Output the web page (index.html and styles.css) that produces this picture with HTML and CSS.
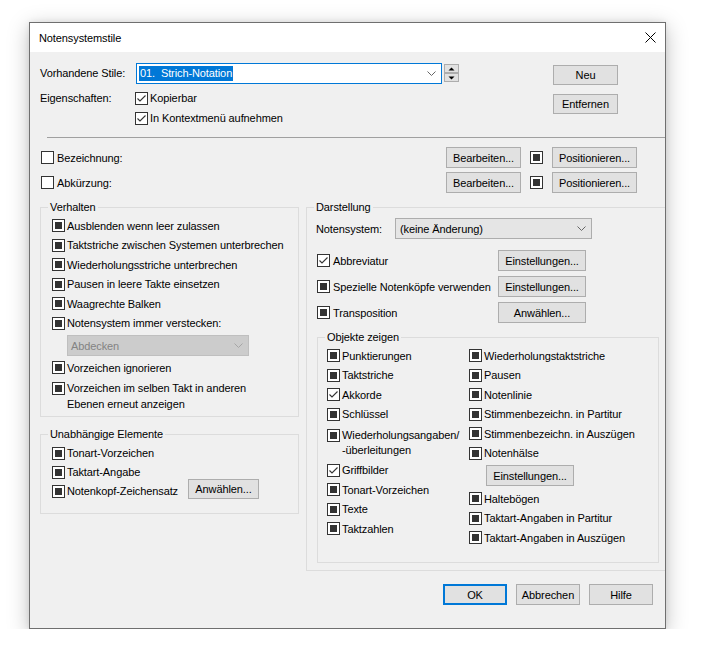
FILE: index.html
```html
<!DOCTYPE html>
<html lang="de">
<head>
<meta charset="utf-8">
<title>Notensystemstile</title>
<link rel="stylesheet" href="styles.css">
</head>
<body>
<div class="dialog">
  <div class="titlebar">
    <span class="title">Notensystemstile</span>
    <span class="close"><svg width="11" height="11" viewBox="0 0 11 11"><path d="M0.5 0.5 L10.5 10.5 M10.5 0.5 L0.5 10.5" stroke="#000" stroke-width="1" fill="none"/></svg></span>
  </div>
  <div class="content">
    <div class="top">
      <div class="top-grid">
        <span class="lbl lbl-combo">Vorhandene Stile:</span>
        <div class="style-row">
          <div class="combo focus"><span class="sel">01.&nbsp; Strich-Notation</span><svg class="chev" width="9" height="5" viewBox="0 0 9 5"><path d="M0.5 0.5 L4.5 4.5 L8.5 0.5" stroke="#666" fill="none"/></svg></div>
          <div class="spin">
            <span class="spin-btn"><svg width="7" height="4" viewBox="0 0 7 4"><path d="M0.5 3.5 L3.5 0.5 L6.5 3.5 Z" fill="#000"/></svg></span>
            <span class="spin-btn"><svg width="7" height="4" viewBox="0 0 7 4"><path d="M0.5 0.5 L3.5 3.5 L6.5 0.5 Z" fill="#000"/></svg></span>
          </div>
        </div>
        <span class="lbl lbl-props">Eigenschaften:</span>
        <div class="props">
          <div class="chk row20"><span class="cb on"><svg width="11" height="11" viewBox="0 0 11 11"><path d="M1.5 5.5 L4 8 L9.5 2.5" stroke="#333" stroke-width="1.1" fill="none"/></svg></span><span>Kopierbar</span></div>
          <div class="chk row20"><span class="cb on"><svg width="11" height="11" viewBox="0 0 11 11"><path d="M1.5 5.5 L4 8 L9.5 2.5" stroke="#333" stroke-width="1.1" fill="none"/></svg></span><span>In Kontextmenü aufnehmen</span></div>
        </div>
      </div>
      <div class="top-buttons">
        <button class="btn w65">Neu</button>
        <button class="btn w65">Entfernen</button>
      </div>
    </div>

    <div class="sep"></div>

    <div class="name-rows">
      <div class="name-row">
        <div class="chk gap3 name-chk"><span class="cb"></span><span>Bezeichnung:</span></div>
        <button class="btn edit">Bearbeiten...</button>
        <span class="cb ind mid"></span>
        <button class="btn pos">Positionieren...</button>
      </div>
      <div class="name-row">
        <div class="chk gap3 name-chk"><span class="cb"></span><span>Abkürzung:</span></div>
        <button class="btn edit">Bearbeiten...</button>
        <span class="cb ind mid"></span>
        <button class="btn pos">Positionieren...</button>
      </div>
    </div>

    <div class="cols">
      <div class="col-left">
        <div class="group g-verhalten">
          <div class="gtitle">Verhalten</div>
          <div class="gbody vb">
            <div class="chk r195"><span class="cb ind"></span><span>Ausblenden wenn leer zulassen</span></div>
            <div class="chk r195"><span class="cb ind"></span><span>Taktstriche zwischen Systemen unterbrechen</span></div>
            <div class="chk r195"><span class="cb ind"></span><span>Wiederholungsstriche unterbrechen</span></div>
            <div class="chk r195"><span class="cb ind"></span><span>Pausen in leere Takte einsetzen</span></div>
            <div class="chk r195"><span class="cb ind"></span><span>Waagrechte Balken</span></div>
            <div class="chk r195"><span class="cb ind"></span><span>Notensystem immer verstecken:</span></div>
            <div class="dd disabled"><span>Abdecken</span><svg class="chev" width="9" height="5" viewBox="0 0 9 5"><path d="M0.5 0.5 L4.5 4.5 L8.5 0.5" stroke="#a6a6a6" fill="none"/></svg></div>
            <div class="chk r195 after-dd"><span class="cb ind"></span><span>Vorzeichen ignorieren</span></div>
            <div class="chk multi m16"><span class="cb ind"></span><span>Vorzeichen im selben Takt in anderen<br>Ebenen erneut anzeigen</span></div>
          </div>
        </div>
        <div class="group g-unab">
          <div class="gtitle">Unabhängige Elemente</div>
          <div class="gbody ub">
            <div class="chk r19"><span class="cb ind"></span><span>Tonart-Vorzeichen</span></div>
            <div class="chk r19"><span class="cb ind"></span><span>Taktart-Angabe</span></div>
            <div class="chk r19"><span class="cb ind"></span><span class="fixlbl">Notenkopf-Zeichensatz</span><button class="btn sel-btn">Anwählen...</button></div>
          </div>
        </div>
      </div>

      <div class="col-right">
        <div class="group g-darst">
          <div class="gtitle">Darstellung</div>
          <div class="gbody db">
            <div class="ns-row">
              <span class="ns-lbl">Notensystem:</span>
              <div class="dd ns"><span>(keine Änderung)</span><svg class="chev" width="9" height="5" viewBox="0 0 9 5"><path d="M0.5 0.5 L4.5 4.5 L8.5 0.5" stroke="#666" fill="none"/></svg></div>
            </div>
            <div class="drows">
              <div class="drow">
                <div class="chk dchk"><span class="cb on"><svg width="11" height="11" viewBox="0 0 11 11"><path d="M1.5 5.5 L4 8 L9.5 2.5" stroke="#333" stroke-width="1.1" fill="none"/></svg></span><span>Abbreviatur</span></div>
                <button class="btn w88">Einstellungen...</button>
              </div>
              <div class="drow">
                <div class="chk dchk"><span class="cb ind"></span><span>Spezielle Notenköpfe verwenden</span></div>
                <button class="btn w88">Einstellungen...</button>
              </div>
              <div class="drow">
                <div class="chk dchk"><span class="cb ind"></span><span>Transposition</span></div>
                <button class="btn w88">Anwählen...</button>
              </div>
            </div>
            <div class="group g-obj">
              <div class="gtitle">Objekte zeigen</div>
              <div class="gbody ob">
                <div class="ocol">
                  <div class="chk r195"><span class="cb ind"></span><span>Punktierungen</span></div>
                  <div class="chk r195"><span class="cb ind"></span><span>Taktstriche</span></div>
                  <div class="chk r195"><span class="cb on"><svg width="11" height="11" viewBox="0 0 11 11"><path d="M1.5 5.5 L4 8 L9.5 2.5" stroke="#333" stroke-width="1.1" fill="none"/></svg></span><span>Akkorde</span></div>
                  <div class="chk r195"><span class="cb ind"></span><span>Schlüssel</span></div>
                  <div class="chk multi m15"><span class="cb ind"></span><span>Wiederholungsangaben/<br>-überleitungen</span></div>
                  <div class="chk r195"><span class="cb on"><svg width="11" height="11" viewBox="0 0 11 11"><path d="M1.5 5.5 L4 8 L9.5 2.5" stroke="#333" stroke-width="1.1" fill="none"/></svg></span><span>Griffbilder</span></div>
                  <div class="chk r195"><span class="cb ind"></span><span>Tonart-Vorzeichen</span></div>
                  <div class="chk r195"><span class="cb ind"></span><span>Texte</span></div>
                  <div class="chk r195"><span class="cb ind"></span><span>Taktzahlen</span></div>
                </div>
                <div class="ocol">
                  <div class="chk r195"><span class="cb ind"></span><span>Wiederholungstaktstriche</span></div>
                  <div class="chk r195"><span class="cb ind"></span><span>Pausen</span></div>
                  <div class="chk r195"><span class="cb ind"></span><span>Notenlinie</span></div>
                  <div class="chk r195"><span class="cb ind"></span><span>Stimmenbezeichn. in Partitur</span></div>
                  <div class="chk r195"><span class="cb ind"></span><span>Stimmenbezeichn. in Auszügen</span></div>
                  <div class="chk r195"><span class="cb ind"></span><span>Notenhälse</span></div>
                  <button class="btn w88 stem-btn">Einstellungen...</button>
                  <div class="chk r195"><span class="cb ind"></span><span>Haltebögen</span></div>
                  <div class="chk r195"><span class="cb ind"></span><span>Taktart-Angaben in Partitur</span></div>
                  <div class="chk r195"><span class="cb ind"></span><span>Taktart-Angaben in Auszügen</span></div>
                </div>
              </div>
            </div>
          </div>
        </div>
      </div>
    </div>

    <div class="footer">
      <button class="btn w64 default">OK</button>
      <button class="btn w64">Abbrechen</button>
      <button class="btn w64">Hilfe</button>
    </div>
  </div>
</div>
</body>
</html>
```

FILE: styles.css
```css
* { box-sizing: border-box; }
html, body { margin: 0; padding: 0; background: #ffffff; }
body {
  font-family: "Liberation Sans", Arial, sans-serif;
  font-size: 11px;
  letter-spacing: -0.1px;
  color: #000;
}

.dialog {
  margin: 22px 0 0 29px;
  width: 637px;
  height: 607px;
  border: 1px solid #6f6f6f;
  background: #f0f0f0;
  box-shadow: 0 5px 20px rgba(0, 0, 0, 0.25), 0 0 6px rgba(0, 0, 0, 0.08);
  overflow: hidden;
  display: flex;
  flex-direction: column;
}

.titlebar {
  height: 29px;
  flex: 0 0 29px;
  background: #ffffff;
  display: flex;
  align-items: center;
  padding: 0 9px 0 9px;
}
.title { font-size: 11px; }
.close { margin-left: auto; display: flex; }

.content {
  flex: 1;
  padding: 11px 0 0 10px;
  display: flex;
  flex-direction: column;
}

/* buttons */
.btn {
  font: inherit;
  letter-spacing: inherit;
  color: #000;
  height: 21px;
  padding: 0;
  background: #e1e1e1;
  border: 1px solid #adadad;
  display: flex;
  align-items: center;
  justify-content: center;
  white-space: nowrap;
}
.w65 { width: 65px; height: 20px; }
.w64 { width: 64px; }
.w88 { width: 88px; }
.default { border: 2px solid #0078d7; }

/* checkboxes */
.chk { display: flex; align-items: center; gap: 2px; white-space: nowrap; }
.gap3 { gap: 3px; }
.cb {
  width: 13px;
  height: 13px;
  flex: 0 0 13px;
  border: 1px solid #333333;
  background: #ffffff;
  display: flex;
  align-items: center;
  justify-content: center;
}
.cb.ind::after {
  content: "";
  width: 7px;
  height: 7px;
  background: #333333;
}
.row20 { height: 20px; }
.r195 { height: 19.5px; }
.r19 { height: 19px; }

/* top section */
.top { display: flex; }
.top-grid {
  display: grid;
  grid-template-columns: 95px auto;
  row-gap: 4px;
  align-items: start;
}
.lbl-combo { line-height: 21px; }
.lbl-props { line-height: 20px; }
.style-row { display: flex; gap: 2px; margin-left: 1px; }
.combo {
  width: 306px;
  height: 21px;
  border: 1px solid #0078d7;
  background: #ffffff;
  display: flex;
  align-items: center;
  padding-left: 2px;
}
.sel {
  background: #0078d7;
  color: #ffffff;
  line-height: 15px;
  padding: 0 1px;
}
.chev { margin-left: auto; margin-right: 5px; }
.spin { display: flex; flex-direction: column; margin-top: 1px; }
.spin-btn {
  width: 15px;
  height: 9px;
  background: #e1e1e1;
  border: 1px solid #adadad;
  display: flex;
  align-items: center;
  justify-content: center;
}
.top-buttons {
  margin-left: auto;
  margin-right: 47px;
  padding-top: 2px;
  display: flex;
  flex-direction: column;
  gap: 9px;
}

.sep {
  border-top: 1px solid #a0a0a0;
  margin: 9px 0 0 7px;
}

/* name rows */
.name-rows { margin-top: 9px; display: flex; flex-direction: column; gap: 4px; }
.name-row { display: flex; align-items: center; height: 21px; }
.name-chk { margin-left: 1px; }
.edit { margin-left: auto; width: 75px; }
.mid { margin: 0 9px; }
.pos { width: 85px; margin-right: 28px; }

/* columns */
.cols { display: flex; gap: 7px; margin-top: 14px; align-items: flex-start; }
.col-left { width: 259px; flex: 0 0 259px; display: flex; flex-direction: column; gap: 17px; }
.col-right { flex: 0 0 380px; }

.group { border: 1px solid #dcdcdc; }
.gtitle {
  width: max-content;
  margin: -8px 0 0 7px;
  padding: 0 2px;
  line-height: 14px;
  background: #f0f0f0;
}

.g-verhalten { height: 210px; }
.vb { padding: 2px 0 0 11px; }
.dd {
  height: 21px;
  display: flex;
  align-items: center;
  padding-left: 3px;
  border: 1px solid #adadad;
  background: #e5e5e5;
}
.dd.disabled {
  width: 182px;
  margin: 2px 0 2px 15px;
  background: #cccccc;
  border-color: #bfbfbf;
  color: #838383;
}
.multi { align-items: flex-start; }
.m16 { padding-top: 2.5px; }
.m16 > span:last-child { line-height: 16px; }
.m16 .cb { margin-top: 1.5px; }

.g-unab { height: 80px; }
.ub { padding: 2.5px 0 0 11px; }
.fixlbl { width: 119px; }
.sel-btn { width: 71px; height: 20px; margin-bottom: 5px; }

.g-darst { height: 364px; }
.db { padding: 4px 0 0 10px; }
.ns-row { display: flex; align-items: center; }
.ns-lbl { width: 79px; margin-left: -1px; }
.dd.ns { width: 197px; padding-left: 4px; }
.drows { margin-top: 11px; display: flex; flex-direction: column; gap: 5px; }
.drow { display: flex; align-items: center; height: 21px; }
.dchk { width: 181px; gap: 3px; }

.g-obj { width: 342px; height: 226px; margin-top: 14px; }
.ob {
  padding: 2px 0 0 9px;
  display: grid;
  grid-template-columns: 142px auto;
}
.ocol { display: flex; flex-direction: column; }
.m15 { padding: 3.5px 0 3px 0; }
.m15 > span:last-child { line-height: 15px; }
.m15 .cb { margin-top: 1px; }
.stem-btn { margin: 2px 0 3px 17px; }

.footer {
  display: flex;
  justify-content: flex-end;
  gap: 9px;
  margin: 13px 12px 0 0;
}
```
